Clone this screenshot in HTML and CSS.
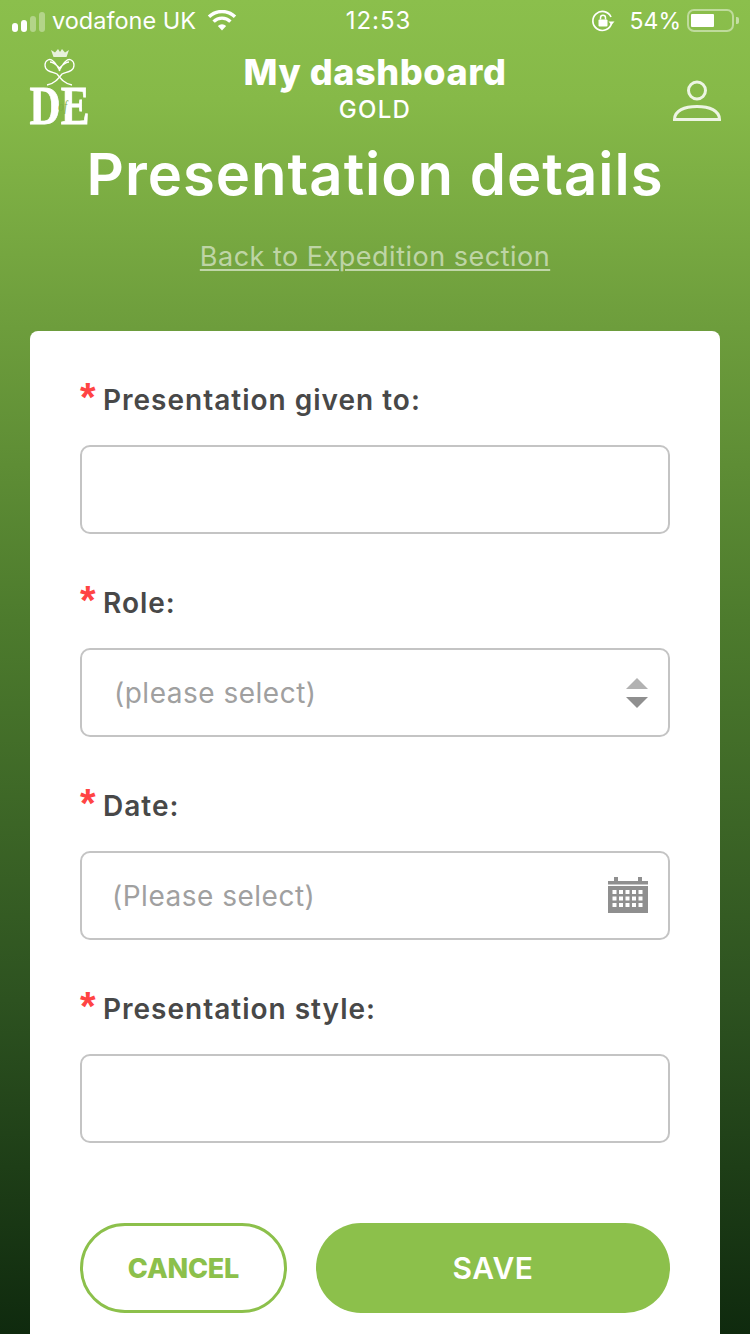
FILE: index.html
```html
<!DOCTYPE html>
<html lang="en">
<head>
<meta charset="utf-8">
<title>Presentation details</title>
<link rel="stylesheet" href="styles.css">
</head>
<body>
<div class="screen">
  <div class="status">
    <div class="status-left">
      <span class="signal"><i class="on s1"></i><i class="on s2"></i><i class="s3"></i><i class="s4"></i></span>
      <span class="carrier">vodafone UK</span>
      <svg class="wifi" viewBox="0 0 30 22" width="30" height="22"><path d="M15 20.500l-4.200-4.600a6.200 6.200 0 0 1 8.400 0z" fill="#fff"/><path d="M6.600 11.600a12 12 0 0 1 16.800 0M2 6.800a18.600 18.600 0 0 1 26 0" fill="none" stroke="#fff" stroke-width="3.400"/></svg>
    </div>
    <div class="time">12:53</div>
    <div class="status-right">
      <svg class="lock" viewBox="0 0 24 24" width="24" height="24"><path d="M20.500 14.500A9.500 9.500 0 1 1 20 8" fill="none" stroke="#fff" stroke-width="1.700"/><path d="M17.500 12.500h6l-3 3.400z" fill="#fff"/><rect x="7.500" y="10.500" width="9" height="7" rx="1" fill="#fff"/><path d="M9.500 10.500V8.700a2.500 2.500 0 0 1 5 0v1.800" fill="none" stroke="#fff" stroke-width="1.500"/></svg>
      <span class="pct">54%</span>
      <span class="battery"><span class="battery-fill"></span></span><span class="battery-tip"></span>
    </div>
  </div>

  <header class="topbar">
    <div class="logo">
      <svg class="crest" viewBox="30 46 58 40" width="58" height="40">
        <path d="M51 50l4 2.500L58 49l2 3 2-3 3 3.500L69 50l-2.500 7h-13z" fill="#fff" opacity=".8"/>
        <path d="M72 85C65 84 61 79 57 74 53 72 45 72 45 65 45 60 50 58 53 61 56 63 58 68 60 71M47 85C54 84 58 79 62 74 66 72 74 72 74 65 74 60 69 58 66 61 63 63 61 68 59 71M50 62C54 62 57 66 59.500 68 62 66 65 62 69 62" fill="none" stroke="#fff" stroke-width="1.300"/>
      </svg>
      <div class="logo-text">D<span class="logo-of">of</span>E</div>
    </div>
    <div class="heading">
      <div class="heading-main">My dashboard</div>
      <div class="heading-sub">GOLD</div>
    </div>
    <svg class="user" viewBox="0 0 48 42" width="48" height="42"><circle cx="24" cy="10.500" r="8.500" fill="none" stroke="#fff" stroke-opacity=".85" stroke-width="3"/><path d="M1.500 39.500c0-9 10-13 22.500-13s22.500 4 22.500 13z" fill="none" stroke="#fff" stroke-opacity=".85" stroke-width="3"/></svg>
  </header>

  <h1 class="title">Presentation details</h1>
  <a class="back" href="#">Back to Expedition section</a>

  <main class="card">
    <div class="field">
      <div class="label"><span class="star">*</span>Presentation given to:</div>
      <div class="input"></div>
    </div>
    <div class="field">
      <div class="label"><span class="star">*</span>Role:</div>
      <div class="input select">
        <span class="placeholder">(please select)</span>
        <svg class="updown" viewBox="0 0 24 30" width="24" height="30"><path d="M12 0l11 11H1z" fill="#b2b2b2"/><path d="M1 19h22L12 30z" fill="#8f8f8f"/></svg>
      </div>
    </div>
    <div class="field">
      <div class="label"><span class="star">*</span>Date:</div>
      <div class="input date">
        <span class="placeholder">(Please select)</span>
        <svg class="cal" viewBox="0 0 40 36" width="40" height="36">
          <rect x="6" y="0" width="4" height="6" fill="#8f8f8f"/><rect x="30" y="0" width="4" height="6" fill="#8f8f8f"/>
          <rect x="0" y="4" width="40" height="3.500" fill="#8f8f8f"/>
          <path fill-rule="evenodd" fill="#8f8f8f" d="M0 9h40v27H0zM4.500 13v4h4v-4zM11 13v4h4v-4zM17.500 13v4h4v-4zM24 13v4h4v-4zM30.500 13v4h4v-4zM4.500 19.500v4h4v-4zM11 19.500v4h4v-4zM17.500 19.500v4h4v-4zM24 19.500v4h4v-4zM30.500 19.500v4h4v-4zM4.500 26v4h4v-4zM11 26v4h4v-4zM17.500 26v4h4v-4zM24 26v4h4v-4zM30.500 26v4h4v-4z"/>
        </svg>
      </div>
    </div>
    <div class="field">
      <div class="label"><span class="star">*</span>Presentation style:</div>
      <div class="input"></div>
    </div>
    <div class="actions">
      <button class="btn cancel" type="button">CANCEL</button>
      <button class="btn save" type="button">SAVE</button>
    </div>
  </main>
</div>
</body>
</html>
```
FILE: styles.css
```css
* { box-sizing: border-box; }
html, body { margin: 0; padding: 0; }
body { width: 750px; height: 1334px; overflow: hidden; font-family: Inter, "Open Sans", sans-serif; }
.screen {
  width: 750px; height: 1334px; overflow: hidden; color: #fff;
  background: linear-gradient(180deg, #8bbf4c 0, #86b948 100px, #6f9f3d 310px, #4d7b2d 620px, #2d5220 1000px, #0f2a0e 1334px);
}
.status { height: 40px; display: flex; align-items: center; justify-content: space-between; padding: 1px 11px 0 12px; position: relative; font-family: Inter, sans-serif; font-size: 23px; font-weight: 400; }
.status-left { display: flex; align-items: center; }
.signal { display: flex; align-items: flex-end; gap: 3px; height: 20px; margin-right: 7px; margin-top: 2px; }
.signal i { display: block; width: 6px; border-radius: 3px; background: rgba(255,255,255,.35); }
.signal .on { background: #fff; }
.s1 { height: 9px; } .s2 { height: 12px; } .s3 { height: 16px; } .s4 { height: 20px; }
.carrier { font-size: 23.5px; }
.wifi { margin-left: 11px; margin-top: 1px; }
.time { position: absolute; left: 7px; right: 0; text-align: center; pointer-events: none; font-size: 24px; letter-spacing: 1px; }
.status-right { display: flex; align-items: center; }
.lock { margin-right: 15px; }
.pct { margin-right: 6px; }
.battery { width: 47px; height: 23px; border: 2px solid rgba(255,255,255,.45); border-radius: 7px; padding: 3px 2px; display: block; }
.battery-fill { display: block; width: 23px; height: 13px; background: #fff; border-radius: 1px; }
.battery-tip { width: 3px; height: 7px; background: rgba(255,255,255,.5); border-radius: 0 2px 2px 0; margin-left: 2px; }
.topbar { height: 86px; display: flex; align-items: flex-start; justify-content: space-between; padding: 6px 29px 0 30px; position: relative; }
.logo { width: 58px; display: flex; flex-direction: column; align-items: center; }
.crest { display: block; flex: none; }
.logo-text { font-family: "Liberation Serif", serif; font-weight: 700; font-size: 54px; line-height: 36px; letter-spacing: 0; position: relative; white-space: nowrap; margin-top: 2px; transform: translateX(1px) scaleX(.8); flex: none; -webkit-text-stroke: .8px #fff; }
.logo-of { position: absolute; left: 36px; top: 12px; font-size: 14px; font-style: italic; font-weight: 400; line-height: 14px; letter-spacing: 0; color: #7fae44; -webkit-text-stroke: 0; }
.heading { position: absolute; left: 0; right: 0; top: 10px; text-align: center; }
.heading-main { font-size: 36px; font-weight: 800; line-height: 44px; letter-spacing: .6px; }
.heading-sub { font-size: 24px; font-weight: 500; line-height: 28px; letter-spacing: 1.300px; margin-top: 2px; }
.user { margin-top: 34px; }
.title { margin: 0; text-align: center; font-size: 58px; font-weight: 600; line-height: 70px; letter-spacing: 1px; margin-top: 13px; }
.back { display: block; text-align: center; margin-top: 31px; height: 33px; font-size: 27px; line-height: 33px; letter-spacing: .5px; color: rgba(255,255,255,.55); text-decoration: underline; text-decoration-thickness: 2px; text-underline-offset: 3px; }
.card { margin: 58px 30px 0; background: #fff; border-radius: 8px 8px 0 0; padding: 51px 50px 40px; height: 1100px; }
.field { margin-bottom: 25px; height: 178px; }
.label { display: flex; align-items: center; color: #484848; font-size: 28px; letter-spacing: 1px; font-weight: 600; height: 36px; line-height: 36px; margin-bottom: 27px; }
.star { color: #f44; font-size: 40px; font-weight: 700; width: 23px; line-height: 36px; font-family: "Liberation Sans", sans-serif; height: 36px; margin-top: -6px; letter-spacing: 0; }
.input { height: 89px; border: 2px solid #c4c4c4; border-radius: 10px; display: flex; align-items: center; justify-content: space-between; color: #a0a0a0; font-size: 28px; letter-spacing: .5px; }
.select { padding: 0 19px 0 32px; }
.date { padding: 0 20px 0 30px; }
.cal { display: block; margin-top: -2px; }
.actions { display: flex; gap: 29px; margin-top: 54px; }
.btn { height: 90px; border-radius: 45px; font-family: Inter, sans-serif; font-size: 27px; display: block; padding: 0; }
.cancel { width: 207px; background: #fff; border: 3px solid #8cc04b; color: #8cc04b; font-weight: 800; letter-spacing: -.2px; }
.save { width: 354px; background: #8cc04b; border: 0; color: #fff; font-weight: 600; font-size: 30px; letter-spacing: .5px; }
```
